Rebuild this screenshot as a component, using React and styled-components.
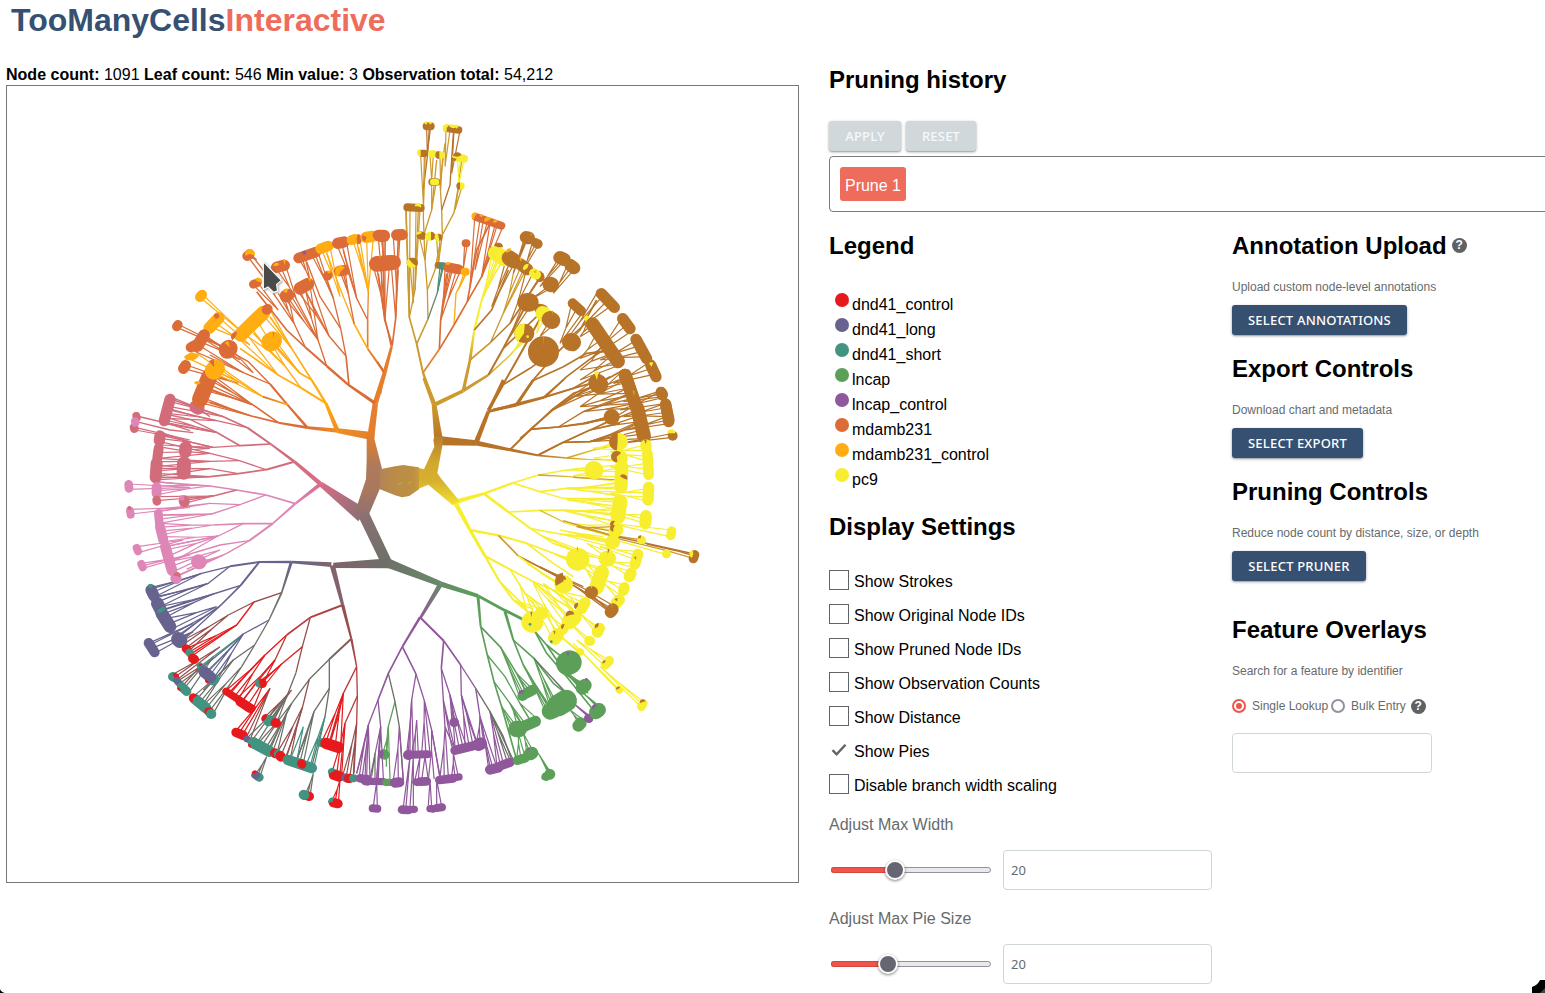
import React from "react";
import styled, { createGlobalStyle } from "styled-components";

const GlobalStyle = createGlobalStyle`
  * { box-sizing: border-box; }
  html, body { margin: 0; background: #fff; overflow: hidden; }
  body { font: 16px/20px "Liberation Sans", Arial, sans-serif; color: #000; }
  h1, h2, p { margin: 0; }
`;

/* ---------- tree data ---------- */

const COLORS = {
  R: "#e6191c", L: "#66638f", T: "#439383", G: "#5b9f59", U: "#90579c",
  M: "#db6c38", Y: "#ffad12", P: "#f7ee30", K: "#d26c7b", I: "#de86b6",
  B: "#b77429", D: "#cc9a2e", O: "#6d7068", N: "#95504e", Q: "#bd3a3a",
  H: "#d9b72e", E: "#e57f2e", V: "#8c7074", W: "#82636a", S: "#688a6a",
  F: "#ee8f22", J: "#d86c88",
};

/*
 * Every sector is drawn on its own grid, three units to a pixel.
 *   b colour width  x y x y ...            branch (width a-b tapers, colour A>B blends)
 *   f colour x y  x1 y1 x2 y2 n            n thin links from a fork to a row of leaves
 *   s colour width x1 y1 x2 y2             row of overlapping leaves
 *   w colour cx cy r from to               pie slice, degrees clockwise from the top
 */
const SECTORS = [
  { x: 340, y: 380, data: `
b V>O 34-32 68 398 140 548
b O>W 30-16 148 550 -20 556
b O>S 28-16 140 548 302 612
b S>G 16-11 302 612 415 648
b G 9-8 415 648 492 690 550 718
b S>U 15-8 302 612 240 716
b B>D 26-14 296 182 282 72
b D 14-10 282 72 252 -6
b B 28-17 296 182 408 189
b B 15-9 408 189 510 209
b B 9-6 510 209 592 226
b B>D 5 592 226 680 234
b D>P 4 680 234 740 238 830 240
b B 15-11 408 189 445 95
b B 9 445 95 490 0
b B 9-7 445 95 530 72 610 52
b B 5 610 52 700 25 780 -20
b B 8 530 72 580 0
b B 5 610 52 672 -2
b B 6 510 209 572 148 635 92
b B 5 635 92 720 40 790 5
b B 5 572 148 655 141 740 130 800 112
b B 5 592 226 670 187 750 150 840 130
b B 4 670 187 750 185 820 170
b D>P 5 680 234 760 210 830 195
b P 14-9 345 366 432 341
b P 7 432 341 518 309
b P 5 518 309 595 285 680 270 760 262
b P 5 518 309 600 335 680 325 830 322
b P 4 600 335 670 355 740 357 830 360
b D>P 4 595 285 690 290 820 302
b P 8 432 341 505 396
b P 6 505 396 572 446
b P 5 572 446 640 490 710 515
b P 5 505 396 600 391 670 390 830 402
b H>P 4 600 391 675 428 820 467
b P 5 572 446 660 462 740 470 830 485
b P 14-10 345 366 390 450
b P 9 390 450 435 528
b P 7 435 528 478 603
b P 6 478 603 520 660 570 700
b P 7 390 450 475 466
b P 6 475 466 560 490
b P 5 560 490 640 520 690 540
b D 5 475 466 535 528
b B 5 535 528 600 562 670 598
b P 5 560 490 640 550 700 590
b P 5 535 528 620 590 670 615
b P 6 435 528 510 568
b P 5 510 568 580 605 650 660 700 690
b P 5 510 568 555 640 610 680
b P 5 478 603 555 680
b P 4 580 605 640 630 720 680
f P 680 270 830 255 830 275 2
f P 680 325 830 308 830 345 3
f P 670 390 830 385 830 425 3
f P 675 428 830 435 830 475 3
f P 670 355 830 355 830 380 2
f P 660 462 820 480 810 500 3
f P 640 520 770 560 780 590 2
f P 640 490 700 510 790 540 2
f P 580 605 730 650 690 710 3
f B 600 562 730 620 760 650 2
f P 520 660 560 690 600 685 3` },

  { x: 110, y: 230, data: `
b E>F 24-14 785 618 682 602
b F>M 13-8 682 602 592 593
b M 8-6 592 593 505 578
b M 5 505 578 424 558 300 518
b M 5 505 578 428 524 300 480
b F>Y 14-9 682 602 648 520
b Y 6 648 520 572 473
b Y 5 572 473 503 434 390 355
b Y 7 648 520 605 450
b Y 5 605 450 545 355 480 260
b Y 5 605 450 568 428 500 350
b Y 4 572 473 525 408 430 310
b M 8-6 592 593 532 524
b M 6 532 524 480 462
b M 4 480 462 415 395 290 325
b M 4 480 462 400 428 300 375
b Y>M 5 532 524 458 500
b Y 4 458 500 385 455 320 425
b E 22-16 782 625 796 520
b E 16-12 796 520 824 428
b M 10-7 796 520 717 466
b M 7 717 466 650 408
b M 6 650 408 586 352
b M 5 586 352 530 300 440 185
b M 4 586 352 552 280 490 190
b M 4 650 408 624 330 560 210
b M 5 717 466 708 378
b M 4 708 378 692 296 670 205 650 150
b M 4 708 378 657 318 590 190
b M 4 692 296 630 200 590 95
b E 8-5 824 428 773 356
b E 5 773 356 773 270
b M 4 773 270 740 205 700 60
b Y 5 773 356 733 283
b Y 4 733 283 700 200 650 70
b M 4 733 283 715 190 700 130
b E>Y 4 773 270 775 185 745 50
b E 12-8 824 428 844 352
b M 4 844 352 825 265 805 130
f M 440 90 412 78 424 74 2
b M 4 412 78 480 168
b M 4 424 74 490 160
f M 505 240 430 165 445 160 2
f M 552 280 505 190 535 200 3
f M 624 330 520 200 545 200 3
f M 624 330 570 180 600 165 3
f M 657 318 560 180 605 165 3
f M 560 210 500 118 528 110 3
f M 600 150 568 88 585 80 3
f M 670 205 605 75 625 70 3
f Y 690 200 635 60 660 50 3
f M 740 205 680 42 710 38 3
f M 715 190 690 124 705 122 2
f Y 775 185 730 35 750 30 3
f Y 775 185 770 25 790 24 2
f M 825 265 805 20 825 20 2
f M 825 265 790 110 838 110 3
f Y 400 310 268 200 280 196 2
f Y 420 345 300 290 330 265 3
f Y 503 434 385 325 405 305 2
f Y 525 408 400 310 440 270 3
f Y 545 355 455 250 480 240 2
f Y 568 428 484 340 495 330 2
f M 365 362 200 292 208 285 2
f M 390 390 270 335 285 315 3
f M 430 428 350 368 365 358 2
f M 400 428 245 360 265 345 2
f Y 385 455 235 385 260 370 2
f M 385 460 220 415 230 405 2
f Y 458 500 315 430 330 410 2
f M 428 524 290 445 300 430 3
f M 428 524 280 480 290 460 3
f M 424 558 270 500 280 520 3
s M 30 412 78 418 73
w Y 420 72 15 250 110
s M 34 500 112 523 106
w Y 524 106 18 345 10
w Y 500 108 10 270 60
s M 26 430 163 442 158
w Y 445 155 12 300 100
s M 38 528 198 534 195
w Y 530 190 14 300 20
s M 38 570 175 594 162
w Y 600 155 12 330 20
s M 32 566 84 618 66
s Y 32 632 56 655 48
s M 34 683 40 702 36
s Y 30 725 30 735 27
w M 740 28 16 10 170
s Y 34 768 22 788 19
w M 770 22 14 200 300
s M 36 810 18 822 18
w U 583 68 6 0 360
s M 28 652 138 654 136
w Y 654 130 8 330 90
s M 32 688 123 703 121
w Y 692 124 17 200 50
s M 46 800 102 845 98
w Y 800 92 12 300 50
s Y 30 270 201 276 194
s M 28 200 290 204 284
s Y 36 298 294 326 264
w M 320 258 8 0 360
s M 36 262 348 282 316
s M 30 242 352 255 345
w Y 244 366 25 110 240
s M 32 220 416 227 406
w Y 230 392 12 320 60
s M 52 352 360 357 355
w Y 360 352 20 310 345
s Y 42 392 314 460 248
w M 377 320 14 220 20
s M 30 470 239 473 237
s Y 56 482 336 488 332
w M 490 325 18 355 8
s K 40 258 530 264 534
s M 48 270 508 298 440
w Y 262 465 12 300 60
s Y 54 311 422 318 415
w M 312 412 24 320 0` },

  { x: 380, y: 110, data: `
b E 8-6 0 852 12 790
b E 8-5 12 788 37 705
b M 5 12 788 -8 755
b M 5 37 705 14 630 8 380
b M 5 37 705 47 625 55 375
b D 10-7 164 888 129 788
b D 6 129 788 110 702
b D 5 110 702 88 622 78 300
b D 5 110 702 144 627
b D 4 144 627 142 540 135 450 130 320 133 140
b D 4 142 540 165 480 180 400
b S 4 144 627 172 548 186 475
b D 4 88 622 105 540 115 300
b E 5 129 788 178 718
b M 5 178 718 182 630 200 490
b M 5 178 718 222 645
b Y 4 222 645 228 550 255 495
b M 5 222 645 262 575 290 420 330 340
b M 5 262 575 305 500 335 420
b D 4 133 370 155 300 170 150
b D 4 175 460 187 375 185 300 180 220 195 100
b D 4 187 375 222 308 235 230 245 150
b B 4 185 300 210 225 220 70
b B 4 130 240 142 140 148 55
b D 13-10 164 884 250 842
b D 10-7 250 842 325 795
b D>P 5 325 795 388 738 430 690
b D 10-8 250 842 270 750
b D>P 9-6 270 750 283 660
b P 7-4 283 660 305 570 350 450
b B 5 283 660 335 600 385 480
b P 4 305 570 345 490 370 450
b D 5 270 750 332 697
b D 4 332 697 370 610 430 480
b B 4 332 697 390 640 450 550 490 490
b B 6 325 795 370 715 430 600
b B 5 370 715 470 620
b B 10-8 325 900 368 825
b B 6 368 825 408 755 500 590
b B 5 368 825 450 775 500 740
b B 9 340 900 410 885
b B 9-6 410 885 458 812
b B 5 458 812 520 740 600 660 650 570
b B 5 458 812 550 770 620 730 700 720
b B 8-6 410 885 495 862
b B 5 495 862 560 800 640 740 700 700
b B 5 495 862 580 835 650 815
b B 5 515 900 580 850 640 830 730 780
f M 14 630 -10 470 10 480 2
f M 47 625 35 480 55 480 2
f M 14 470 4 385 16 385 2
f M 50 540 40 380 60 375 2
f D 88 622 78 300 90 300 2
f D 105 540 108 300 120 300 2
f D 100 580 90 460 100 460 2
f D 135 450 118 380 142 385 2
f D 130 280 122 135 136 135 2
f B 142 130 140 50 152 50 2
f D 155 300 155 220 168 220 2
f D 155 210 150 135 160 135 2
f D 182 240 180 140 188 140 2
f D 195 170 198 60 210 60 2
f B 215 190 222 60 240 62 2
f P 235 230 232 145 252 148 3
f D 225 300 236 230 246 230 2
f D 175 470 170 385 180 385 2
f T 172 548 180 470 190 470 2
f M 190 580 195 475 212 480 2
f M 182 630 205 480 240 485 4
f Y 235 540 252 488 260 488 2
f M 250 475 254 402 262 402 2
f M 270 530 284 325 300 328 2
f M 285 480 310 330 322 335 2
f M 305 500 330 340 345 345 2
f M 305 500 350 350 368 352 2
f P 305 570 335 440 365 455 4
f B 335 590 375 460 400 465 3
f D 370 610 405 465 440 475 3
f B 390 640 440 475 480 500 3
f B 400 490 430 395 440 392 3
f B 430 480 455 405 475 405 3
f B 480 530 530 455 550 455 3
f B 520 550 560 470 585 475 3
f B 450 570 505 530 520 530 2
f B 390 680 430 580 450 590 2
f P 470 670 480 620 495 620 2
f B 480 680 505 640 525 640 2
f P 400 725 425 685 440 690 2
f B 540 700 575 580 610 605 3
f B 560 690 650 550 690 590 4
f B 600 680 620 640 650 650 3
f B 600 745 650 670 700 720 4
f B 600 780 670 700 725 760 3
f B 600 810 690 740 720 765 3
f B 640 740 725 625 760 660 3
f B 660 750 770 690 800 740 4
f B 700 820 810 755 835 790 3
f B 600 890 720 790 765 880 5
f B 720 900 840 845 860 880 3
s B 24 140 49 152 49
w P 140 44 10 300 20
w P 150 44 9 330 50
s B 22 200 55 236 60
w P 200 54 12 180 40
w P 216 54 11 300 90
w P 230 56 11 320 40
s B 22 126 130 134 130
s P 22 155 132 163 132
w P 122 128 11 180 360
s P 22 182 135 184 135
w B 178 135 12 180 360
s P 24 228 142 252 146
w B 232 140 13 280 70
w B 222 145 8 100 300
s B 22 156 216 170 216
s P 20 160 216 168 216
s P 22 242 228 243 228
w B 240 228 11 180 0
s B 24 82 292 122 294
w P 114 289 10 270 110
s B 24 122 376 126 377
s P 26 148 379 150 379
w B 153 378 13 0 180
w P 118 373 9 260 60
s B 22 174 382 176 382
w P 176 382 12 170 350
s B 30 95 458 99 458
w P 96 458 16 130 320
s B 20 174 466 178 466
s T 22 186 468 190 468
s M 30 205 472 236 478
w Y 205 465 9 280 60
s Y 24 254 485 257 485
s M 24 257 400 259 400
s M 24 288 321 364 347
w Y 285 318 11 200 40
w Y 305 322 9 300 40
w Y 324 332 11 250 60
w Y 347 338 9 280 50
s M 34 -5 376 12 376
s M 34 50 375 66 374
s M 42 -10 460 42 457
w Y 0 445 10 345 15
s P 46 347 430 372 446
w B 355 412 14 290 90
s B 46 388 444 400 452
s B 36 420 462 442 478
w Y 388 425 10 250 40
w Y 423 455 12 335 20
w P 442 475 13 240 20
s B 28 476 496 480 502
s P 30 462 490 468 494
w Y 468 490 9 300 10
s B 38 438 382 446 384
s B 28 466 398 474 402
w Y 452 380 10 0 20
s B 40 540 443 552 448
s B 38 572 466 582 474
s B 46 510 523 514 524
s B 56 440 577 448 577
s B 30 478 596 488 598
s P 44 488 610 498 618
s B 50 510 628 516 632
w D 518 618 16 350 5
s B 58 432 670 434 670
w P 432 670 29 215 5
w P 443 680 4 0 360
s B 92 490 725 491 725
w D 490 712 32 358 3
s B 54 573 696 576 697
s B 30 578 580 603 603
s B 34 664 551 703 592
s P 16 620 625 626 630
s B 42 638 643 714 754
s B 34 728 626 750 656
s B 34 768 688 800 746
s B 34 812 765 828 800
w P 815 770 13 320 20
s B 54 653 820 658 824
w P 653 815 27 340 10
s B 38 736 795 768 890
s B 32 843 846 847 856
s B 34 857 882 866 935` },

  { x: 520, y: 330, data: `
b B 5 0 325 35 297
b B 4 35 297 92 242 160 200 270 140
b B 5 35 297 115 291 190 280 275 262
b B 4 115 291 190 245 330 190
b B 5 55 376 130 337
b B 4 130 337 210 300 350 240
b B 5 130 337 210 335 290 310 375 270
f B 92 242 210 160 240 175 2
f B 160 200 320 140 335 190 4
f B 190 245 335 190 350 235 4
f B 190 280 250 265 280 265 2
f B 210 300 345 225 360 275 4
f B 210 335 355 275 375 325 5
f B 310 215 415 185 430 200 3
f B 310 260 435 220 445 260 4
f B 320 300 440 260 450 280 3
f B 300 340 450 312 458 322 2
f P 220 355 290 335 300 360 3
f P 220 384 290 375 300 395 2
f P 270 365 375 345 385 395 4
f P 270 410 380 400 385 435 3
f P 160 437 290 415 300 440 2
f D 160 442 220 446 300 450 2
f P 140 475 290 460 300 500 4
f P 140 510 290 505 300 540 4
f P 270 490 386 475 386 515 4
f P 130 542 280 540 290 590 4
f P 270 548 380 555 375 580 3
f D 170 590 280 590 290 620 3
f P 270 580 455 600 450 620 2
b D 4 130 572 270 615 364 630
b B 4 290 620 523 672
b D 4 270 620 440 662 520 685
b B 4 380 642 480 665 523 678
b P 4 270 625 440 674
f P 120 600 250 620 285 640 3
f P 60 615 180 675 262 690 3
f P 200 640 250 660 270 690 2
f P 240 650 355 665 350 690 3
f P 240 690 350 700 330 740 4
f P 180 690 240 720 230 780 4
f P 230 740 315 765 300 815 4
f B 60 710 125 745 214 787 2
f B 160 765 278 838 272 848 3
f B 200 780 285 830 270 846 2
f P 20 700 110 760 150 780 2
f P 120 780 195 820 160 870 4
f P 70 760 190 830 150 880 3
f P 40 760 150 865 110 920 4
f P 0 765 60 845 30 880 3
f P 30 800 130 890 100 930 3
f P 180 850 240 895 230 910 3
f P 130 860 210 930 205 936 2
f P 100 900 180 966 176 968 2
f P 170 930 270 992 255 1008 3
f P 160 940 298 1079 294 1080 2
f P 240 1010 370 1115 362 1130 3
s B 34 424 188 427 193
s B 34 437 225 447 270
w B 458 317 15 0 360
w P 454 310 12 270 90
s B 38 315 135 345 220
s B 42 352 235 372 318
w D 342 200 18 345 10
s B 54 232 158 236 162
w P 231 150 26 340 10
s B 46 274 261 276 261
w P 298 335 26 0 360
w B 293 335 26 185 0
s P 40 303 382 303 388
w B 290 380 17 170 50
s P 40 305 410 303 470
s P 44 300 515 294 560
s P 38 291 600 284 606
s P 40 275 637 280 637
w B 310 445 12 300 110
w B 280 582 10 180 30
w B 280 595 10 180 30
s P 34 378 345 378 350
s P 32 382 370 386 434
w B 378 343 15 335 8
s P 54 220 420 223 421
s P 34 386 472 384 510
s P 36 378 558 376 580
s P 28 455 603 452 617
s P 26 364 630 365 630
w B 362 625 9 270 10
s P 26 439 672 440 672
s B 28 524 674 520 686
w P 520 672 12 200 350
s P 68 172 688 174 688
w B 172 667 15 355 5
s P 48 260 686 264 686
w B 263 672 15 0 25
s P 32 354 672 345 703
w B 346 690 10 340 20
s P 34 333 730 328 740
s P 44 245 727 230 772
s B 38 213 787 215 787
w P 214 776 10 350 10
s P 32 313 772 310 782
s P 34 298 810 288 820
w B 292 814 10 300 0
s B 36 278 838 272 846
w D 276 835 12 350 5
s P 54 130 763 132 763
w B 131 754 26 240 355
w B 126 748 12 320 100
s P 34 195 818 185 835
s P 46 162 862 148 875
s P 30 132 893 128 900
s P 40 112 915 104 925
w B 173 829 11 220 10
w B 150 855 13 250 80
w B 131 890 8 200 20
w T 94 935 4 0 360
w B 105 915 13 335 5
s P 34 238 895 232 906
w B 234 890 10 240 20
s P 30 208 933 210 933
s P 22 179 966 181 966
s P 28 268 992 256 1004
w B 254 998 7 250 30
s P 22 297 1079 298 1080
w B 295 1077 7 250 50
s P 26 370 1120 364 1130
w B 368 1116 8 250 80
s P 64 36 876 38 876
s P 38 63 850 66 850
w B 35 862 17 345 5
w T 30 883 4 0 360` },

  { x: 110, y: 380, data: `
b V>J 44-15 758 406 632 312
b J>K 13-9 632 312 553 245
b K 8-6 553 245 482 192
b K 6 482 192 412 143
b K 5 412 143 340 110 190 60
b K 4 412 143 320 122 180 90
b K 5 482 192 390 197 322 158
b K 4 322 158 240 118 180 105
b K 4 322 158 180 130
b K 4 390 197 310 202 150 165
b K 6 553 245 468 269
b K 4 468 269 388 242 300 220 150 185
b K 5 468 269 385 281 300 290 140 293
b K 4 388 242 300 244 145 245
b K 4 385 281 300 266 140 265
b J>I 12-7 632 312 556 371
b I 5 556 371 468 345 380 330
b I 4 380 330 300 318 140 306
b K 4 380 330 310 348 220 362
b I 4 468 345 390 374 300 370
b I 7-5 556 371 488 431
b I 5 488 431 400 431 310 435
b I 6 488 431 418 482
b I 4 418 482 330 495 180 540
b I 4 418 482 350 520 200 590
b I 4 390 374 305 402 150 405
b I 4 400 431 325 468 165 500
f K 340 110 180 50 180 80 3
f K 320 122 175 85 170 115 3
f K 300 110 255 80 270 88 3
f K 322 158 165 110 160 130 3
b K 4 80 108 180 132 240 152
b K 4 76 124 180 150 250 158
f K 240 180 74 142 76 150 2
f K 310 202 145 155 150 195 3
f K 300 205 225 200 230 210 2
f K 300 220 145 200 145 235 3
f K 300 244 142 235 140 260 2
f K 300 266 140 255 138 290 3
f K 300 290 138 280 135 300 2
f I 300 318 140 305 138 345 4
f I 240 322 56 312 56 328 2
f K 310 348 140 350 140 362 2
f K 310 348 222 355 222 370 2
f I 240 382 62 388 62 402 2
f I 300 370 145 388 145 395 2
f I 305 402 148 405 148 430 3
f I 310 435 150 430 155 465 4
f I 325 468 160 470 165 500 3
f I 220 480 82 500 85 518 2
f I 320 470 165 510 180 550 3
f I 240 525 95 550 98 565 3
f I 330 510 175 545 190 575 3
f I 340 525 265 545 195 590 3
s K 34 180 58 163 122
s K 24 79 108 80 113
s K 26 72 142 73 146
s I 24 75 124 76 128
s K 34 150 168 148 182
s K 30 146 205 142 235
s K 36 140 250 137 292
s K 38 227 203 226 215
s K 42 222 250 221 278
s I 30 140 322 140 340
s K 26 140 360 141 364
s I 26 56 313 57 325
s K 32 222 362 223 366
w I 215 354 8 0 360
s I 24 60 392 62 404
w K 58 384 6 0 360
s I 26 145 400 148 430
s I 30 150 440 160 480
s I 32 166 500 186 572
s I 32 197 595 199 596
w K 201 587 11 270 120
s I 24 80 504 84 514
s I 24 94 552 98 562
s I 44 265 545 268 546` },

  { x: 130, y: 560, data: `
b W>L 14-8 604 14 484 6
b L 7-6 484 6 388 6 300 19
b L 4 300 19 215 40 70 85
b L 6 388 6 332 76
b L 5 332 76 270 138
b L 4 270 138 140 230
b L 4 332 76 250 102 100 150
b L 4 300 19 235 70 90 110
b L>O 9-5 484 6 455 98
b N 4 455 98 372 126 295 165
b O 6-4 455 98 417 180
b L 4 417 180 340 222 220 320
b O 4 417 180 374 255 335 320
b R 4 372 126 320 195 185 280
b W 16-9 607 16 638 135
b N 10-6 638 135 664 236
b N>Q 7-4 664 236 680 320
b Q>N 4 680 320 682 408 680 490 672 640
b Q 4 680 320 640 400 600 540
b Q 4 682 408 645 490 630 640
b N>Q 6 638 135 541 172
b Q 5 541 172 470 225
b R 4 470 225 405 285 300 395
b Q 4 470 225 435 300 330 430
b N 4 541 172 517 260 498 338
b R 4 517 260 455 312 390 370
b N>O 6 664 236 598 298
b O 4 598 298 538 358 485 430 420 560
b O 4 598 298 598 385 585 470 545 620
b O 4 598 385 552 455 500 600
b N 4 538 358 518 440 470 590
b O 4 498 338 470 410 430 480
b O 4 374 255 310 300 220 390
f L 215 40 65 82 75 110 3
f L 235 70 80 110 90 140 3
f L 250 102 90 140 110 170 4
f L 260 140 110 175 130 205 3
f L 270 138 140 215 160 240 3
f L 190 190 55 250 60 255 2
f L 190 215 65 265 75 280 2
f N 295 165 150 245 180 270 4
f R 320 195 170 265 190 285 3
f N 270 260 125 345 140 360 3
f N 210 320 140 365 160 375 2
f O 250 290 150 370 175 400 3
f T 340 222 210 320 230 340 2
f L 340 222 230 335 260 365 4
f O 310 300 190 410 215 440 4
f O 335 320 215 440 250 460 4
f R 405 285 290 390 325 420 4
f R 435 300 320 415 370 445 4
f R 455 312 380 370 405 375 3
f R 420 385 320 510 340 520 3
f N 420 385 350 530 360 540 2
f N 485 390 400 475 420 480 3
f O 470 410 350 535 380 550 3
f O 470 410 420 480 440 490 3
f O 485 430 380 555 420 570 4
f O 470 460 430 570 440 585 2
f N 518 440 440 580 480 600 4
f T 520 500 480 600 500 605 2
f O 552 455 500 600 520 610 3
f T 585 470 530 610 550 630 3
f O 410 590 375 645 390 650 3
f O 550 640 525 705 540 710 3
f R 640 400 575 545 600 550 3
f R 640 400 600 550 632 560 3
f R 645 490 605 640 635 645 3
f N 680 490 640 640 670 650 4
f R 630 660 605 725 625 732 3
s L 34 63 90 72 108
s L 38 82 130 92 150
s L 38 95 160 120 200
w T 61 78 7 0 360
s T 12 88 153 100 146
s L 44 145 238 150 242
s L 30 56 249 74 277
s R 26 168 266 172 269
s T 24 178 278 181 281
s R 28 188 295 193 298
s T 28 128 350 133 352
w R 134 353 14 330 150
s L 22 141 362 145 367
s T 28 155 380 170 394
w R 149 384 8 160 280
s T 20 210 317 212 320
w R 212 317 6 270 80
s T 32 246 360 252 358
s L 34 222 335 242 352
w R 233 362 8 150 290
s T 32 196 418 228 444
w R 190 414 14 190 60
s R 26 236 455 239 455
s T 30 243 462 244 462
s R 22 288 394 366 445
s R 28 330 425 360 445
s R 28 393 370 397 370
w T 388 370 13 160 0
s T 34 416 482 418 482
w R 408 476 14 230 20
s R 28 436 488 439 489
s R 28 318 517 340 526
s L 20 350 537 352 538
s T 34 370 548 418 574
w R 362 555 8 170 300
s R 28 434 579 436 581
s T 26 444 582 446 584
s R 30 451 588 453 590
s T 32 474 600 545 624
s R 26 514 610 516 613
s T 26 384 650 388 652
s L 24 376 645 378 646
w R 374 640 9 270 70
s R 28 533 708 538 709
s T 30 521 704 523 705
s T 26 572 548 576 548
s R 34 588 550 625 562
s R 32 612 644 628 649
w T 606 636 12 240 60
s L 26 647 653 651 655
s R 28 656 655 659 655
s T 24 669 655 671 655
s R 28 610 728 624 731
w T 608 726 14 260 20` },

  { x: 340, y: 560, data: `
b U 8-6 240 172 187 260
b U 6 240 172 311 242
b U 5 187 260 145 340 114 420
b U 4 114 420 85 495 50 640
b U 5 187 260 228 342
b U 4 228 342 215 420 205 580
b U 4 228 342 253 422 275 510 300 650
b O 4 145 340 165 425 178 500 190 660
b U 4 114 420 122 500 110 660
b G 4 165 425 145 500 140 580
b U 5 311 242 304 325
b U 4 304 325 310 420 315 500 345 570
b U 4 304 325 330 405 343 480
b U 5 311 242 362 315
b U 4 362 315 364 405 410 545
b U 4 362 315 407 385
b U 4 407 385 420 470 450 620
b O 4 407 385 450 455 490 530 515 600
b G 9-6 414 110 422 200
b G 5 422 200 442 285 462 365 485 440 530 600
b G 5 422 200 482 262 530 340 560 400
b G 4 442 285 495 350 540 430 570 480
b G 4 462 365 510 430 550 500
b G 9-6 495 155 520 240
b G 5 520 240 550 315 600 400 630 440
b G 5 520 240 582 295 640 370 690 410
b G 6 495 150 548 180 585 215
b G 5 585 215 620 255 690 310
b G 5 585 215 620 280 680 350 760 450
b G 5 620 255 680 345 735 380
f U 85 495 50 640 75 655 4
f U 85 495 80 650 90 655 2
f U 122 500 90 655 110 660 2
f O 105 580 95 650 105 655 2
f U 122 500 115 655 130 655 2
f U 110 665 100 740 112 740 2
f G 145 500 128 580 150 660 3
f U 178 500 160 660 190 665 3
f U 215 420 200 580 220 580 3
f U 230 480 215 580 235 585 3
f U 253 422 245 580 270 580 3
f U 210 590 190 740 198 740 2
f U 220 590 210 740 220 740 2
f U 275 510 265 660 300 655 3
f U 240 590 225 660 235 660 2
f U 255 590 245 660 265 660 2
f U 270 660 265 735 275 740 2
f U 290 660 290 735 305 740 2
f U 310 420 335 560 345 570 2
f U 315 500 300 650 325 650 3
f U 340 580 335 650 355 650 3
f U 330 405 336 485 345 485 2
f U 330 405 345 560 380 560 4
f U 364 405 375 555 410 550 4
f U 420 470 410 545 430 540 3
f U 420 470 445 620 470 620 3
f U 450 455 470 610 490 610 3
f O 450 455 500 600 520 600 3
f G 485 440 510 500 530 500 3
f G 510 430 530 490 555 490 3
f G 482 262 535 400 550 400 3
f G 530 340 555 390 580 390 3
f G 540 430 570 480 590 475 2
f G 535 520 530 595 555 590 3
f G 550 520 560 580 580 575 3
f G 595 580 620 630 630 635 3
f G 550 315 610 440 630 440 4
f G 582 295 630 440 650 430 4
f O 582 295 665 385 690 410 3
f G 670 330 715 380 735 390 3
f G 690 345 730 370 745 400 3
f G 730 400 770 440 780 440 3
f U 700 430 745 465 750 475 2
f G 690 450 715 490 730 480 3
s U 26 60 655 75 658
s U 32 77 660 82 661
s U 22 95 664 130 665
s G 22 138 667 150 667
s U 30 165 668 178 667
s U 24 98 745 112 746
s G 30 133 583 134 584
w U 131 583 15 200 350
s U 30 204 585 206 585
s U 24 215 584 262 583
s U 22 228 666 230 667
s U 26 240 665 260 664
s U 26 298 660 340 655
s U 22 345 653 357 651
s U 26 186 749 205 750
s U 22 210 749 223 748
s U 22 270 746 280 747
s U 24 290 744 306 742
s U 28 342 487 343 487
s U 28 345 571 400 557
s U 38 416 554 422 551
s U 30 450 629 475 623
s U 28 482 617 510 607
s G 28 532 601 555 594
s G 38 570 582 576 579
w U 564 572 8 340 30
s G 30 547 408 552 405
s G 32 562 398 578 390
w U 545 399 9 250 70
s G 50 530 507 536 507
s G 34 545 502 586 484
s G 24 616 650 619 651
s G 32 629 642 630 643
s G 50 630 454 644 448
s G 66 655 436 678 422
s G 72 684 310 689 307
w U 684 293 17 350 12
s G 40 727 384 735 376
w U 738 362 8 340 70
s G 36 715 497 722 490
s U 26 745 474 747 476
s G 42 768 457 777 450
w U 764 441 8 200 60` },
];

function taperOutline(pts, w1, w2) {
  const left = [];
  const right = [];
  const last = pts.length - 1;
  pts.forEach(([x, y], i) => {
    const [ax, ay] = pts[Math.max(0, i - 1)];
    const [bx, by] = pts[Math.min(last, i + 1)];
    const len = Math.hypot(bx - ax, by - ay) || 1;
    const half = (w1 + ((w2 - w1) * i) / last) / 2;
    const nx = (-(by - ay) / len) * half;
    const ny = ((bx - ax) / len) * half;
    left.push(`${x + nx},${y + ny}`);
    right.unshift(`${x - nx},${y - ny}`);
  });
  return [...left, ...right].join(" ");
}

function slicePath(cx, cy, r, from, to) {
  const sweep = ((to - from) % 360 + 360) % 360;
  if (sweep === 0) {
    return `M${cx - r} ${cy}a${r} ${r} 0 1 1 ${2 * r} 0a${r} ${r} 0 1 1 ${-2 * r} 0Z`;
  }
  const at = (deg) => {
    const a = (deg * Math.PI) / 180;
    return `${cx + r * Math.sin(a)} ${cy - r * Math.cos(a)}`;
  };
  return `M${cx} ${cy}L${at(from)}A${r} ${r} 0 ${sweep > 180 ? 1 : 0} 1 ${at(to)}Z`;
}

const parse = (data) => data.trim().split("\n").map((row) => row.trim().split(/\s+/));

function Branch({ id, row }) {
  const [, colour, width, ...rest] = row;
  const n = rest.map(Number);
  const pts = [];
  for (let i = 0; i < n.length; i += 2) pts.push([n[i], n[i + 1]]);
  const [c1, c2] = colour.split(">");
  const [w1, w2] = width.split("-").map(Number);
  const [start, end] = [pts[0], pts[pts.length - 1]];
  const paint = c2 ? `url(#${id})` : COLORS[c1];
  return (
    <>
      {c2 && (
        <linearGradient id={id} gradientUnits="userSpaceOnUse" x1={start[0]} y1={start[1]} x2={end[0]} y2={end[1]}>
          <stop offset="0" stopColor={COLORS[c1]} />
          <stop offset="1" stopColor={COLORS[c2]} />
        </linearGradient>
      )}
      {w2 ? (
        <polygon points={taperOutline(pts, w1, w2)} fill={paint} />
      ) : (
        <polyline points={pts.map((p) => p.join(",")).join(" ")} fill="none" stroke={paint} strokeWidth={w1} strokeLinejoin="round" />
      )}
    </>
  );
}

/* Leaves hang in pairs: each pair shares a short stem before it splits. */
function Fan({ row }) {
  const [x, y, x1, y1, x2, y2, count] = row.slice(2).map(Number);
  const leaf = (i) => {
    const t = i / (count - 1);
    return [x1 + (x2 - x1) * t, y1 + (y2 - y1) * t];
  };
  let d = "";
  for (let i = 0; i < count; i += 2) {
    const a = leaf(i);
    if (i + 1 >= count || count === 2) {
      d += `M${x} ${y}L${a[0]} ${a[1]}`;
      if (count === 2) d += `M${x} ${y}L${x2} ${y2}`;
      continue;
    }
    const b = leaf(i + 1);
    const fx = x + ((a[0] + b[0]) / 2 - x) * 0.4;
    const fy = y + ((a[1] + b[1]) / 2 - y) * 0.4;
    d += `M${x} ${y}L${fx} ${fy}L${a[0]} ${a[1]}M${fx} ${fy}L${b[0]} ${b[1]}`;
  }
  return <path d={d} fill="none" stroke={COLORS[row[1]]} strokeWidth="3.6" />;
}

function Leaves({ row }) {
  const [w, x1, y1, x2, y2] = row.slice(2).map(Number);
  return <line x1={x1} y1={y1} x2={x2} y2={y2} stroke={COLORS[row[1]]} strokeWidth={w} strokeLinecap="round" />;
}

function SectorLayer({ sector, index, nodes }) {
  return (
    <g transform={`translate(${sector.x} ${sector.y}) scale(.33333)`}>
      {parse(sector.data).map((row, i) => {
        if (!nodes && row[0] === "b") return <Branch key={i} id={`br${index}-${i}`} row={row} />;
        if (!nodes && row[0] === "f") return <Fan key={i} row={row} />;
        if (nodes && row[0] === "s") return <Leaves key={i} row={row} />;
        if (nodes && row[0] === "w") return <path key={i} d={slicePath(...row.slice(2).map(Number))} fill={COLORS[row[1]]} />;
        return null;
      })}
    </g>
  );
}

function Trunk() {
  return (
    <g transform="translate(340 380) scale(.33333)">
      <defs>
        <linearGradient id="hub"><stop offset="0" stopColor="#b38455" /><stop offset=".3" stopColor="#b98b49" /><stop offset=".85" stopColor="#bd9043" /><stop offset="1" stopColor="#c69c39" /></linearGradient>
        <linearGradient id="west" x2="0" y2="1"><stop offset="0" stopColor="#e87f28" /><stop offset=".4" stopColor="#ad7a5c" /><stop offset=".68" stopColor="#aa785d" /><stop offset="1" stopColor="#8c7074" /></linearGradient>
        <linearGradient id="east" x2="0" y2="1"><stop offset="0" stopColor="#b8802c" /><stop offset=".4" stopColor="#d3a92f" /><stop offset=".65" stopColor="#d7b02f" /><stop offset="1" stopColor="#f2e22f" /></linearGradient>
      </defs>
      <polygon fill="url(#west)" points="80,155 103,160 103,176 125,262 128,305 118,330 83,412 48,386 78,298 80,240" />
      <polygon fill="url(#east)" points="252,268 283,200 280,180 284,168 310,170 308,192 292,280 305,298 358,362 338,376 265,314 236,326 236,264" />
      <polygon fill="url(#hub)" points="120,268 165,259 190,255 210,258 237,262 237,328 208,348 186,352 165,346 120,328" />
      <path d="M174 312l12-3 M204 310l12-5" stroke="#d9b72e" strokeWidth="2" />
    </g>
  );
}

function Tree() {
  return (
    <TreeSvg viewBox="7 86 791 796">
      {SECTORS.map((s, i) => <SectorLayer key={i} sector={s} index={i} />)}
      <Trunk />
      {SECTORS.map((s, i) => <SectorLayer key={i} sector={s} index={i} nodes />)}
      <path d="M263.3 261.5V289.5L268 287L273.4 292.2L277.6 290.8L276.6 284.4L281.4 280.4Z" fill="#4a4a4a" stroke="#fff" strokeWidth="1.2" filter="drop-shadow(1px 1px 1px rgba(0,0,0,.35))" />
    </TreeSvg>
  );
}

/* ---------- page ---------- */

const Page = styled.div`
  position: relative; width: 1545px; height: 993px; overflow: hidden;
`;
const Header = styled.header`
  height: 64px; padding-left: 11px;
`;
const Title = styled.h1`
  font-size: 32px; line-height: 40px; color: #365071; white-space: nowrap;
  span { color: #ee6c5b; }
`;
const Main = styled.main`
  display: flex; gap: 30px; padding-left: 6px;
`;
const ChartColumn = styled.section` width: 793px; flex: none; `;
const Stats = styled.p`
  height: 21px; line-height: 21px; letter-spacing: 0.015px; white-space: nowrap;
`;
const ChartFrame = styled.div`
  width: 793px; height: 798px; border: 1px solid #777;
`;
const TreeSvg = styled.svg` display: block; width: 791px; height: 796px; `;
const Side = styled.section` width: 740px; flex: none; padding-top: 2px; `;
const Heading = styled.h2`
  display: flex; align-items: center; gap: 5px;
  height: 28px; font-size: 24px; line-height: 28px; white-space: nowrap;
`;
const ButtonRow = styled.div` display: flex; gap: 5px; margin: 27px 0 5px; `;
const Button = styled.button`
  display: block; width: ${(p) => p.$w}px; height: 30px; padding: 0; border: 0; border-radius: 3px;
  font: 500 13px/30px "Noto Sans", sans-serif; letter-spacing: 0.2px; text-align: center; white-space: nowrap;
  color: ${(p) => (p.$muted ? "#f6f8f8" : "#fff")};
  background: ${(p) => (p.$muted ? "#d0d8dc" : "#365071")};
  box-shadow: 0 1px 3px rgba(0, 0, 0, 0.35), 0 1px 1px rgba(0, 0, 0, 0.12);
`;
const History = styled.div`
  height: 56px; padding: 10px; border: 1px solid #7b7b7b; border-radius: 4px;
`;
const Chip = styled.div`
  width: 66px; height: 34px; border-radius: 3px; background: #ee6c5b; color: #fff;
  line-height: 37px; text-align: center; white-space: nowrap;
`;
const Columns = styled.div` display: flex; margin-top: 20px; `;
const SettingsColumn = styled.div` width: 403px; `;
const ToolsColumn = styled.div` width: 320px; `;
const LegendList = styled.ul`
  list-style: none; margin: 32px 0 21px; padding: 0 0 0 6px;
`;
const LegendItem = styled.li`
  display: flex; gap: 3px; height: 25px; line-height: 25px;
  &::before {
    content: ""; width: 14px; height: 14px; margin-top: 1px; border-radius: 50%; background: ${(p) => p.$c};
  }
`;
const CheckList = styled.div` margin-top: 26px; padding-top: 3px; `;
const CheckRow = styled.label`
  display: flex; gap: 5px; height: 34px; line-height: 23px;
`;
const Box = styled.span`
  width: 20px; height: 20px; border: ${(p) => (p.$on ? 0 : "1px solid #5f6567")}; flex: none;
  svg { display: block; width: 20px; height: 20px; }
`;
const SliderLabel = styled.div` height: 20px; margin-top: ${(p) => p.$top}px; color: #666b6c; `;
const SliderRow = styled.div`
  display: flex; align-items: center; gap: 12px; height: 40px; margin-top: 15px; padding-left: 2px;
`;
const Track = styled.div`
  display: flex; align-items: center; width: 160px; height: 6px; border-radius: 3px; border: 1px solid #92929f;
  background: #e9e9ec;
`;
const Fill = styled.div`
  flex: none; height: 6px; margin-left: -1px; border-radius: 3px 0 0 3px; background: #f0554d; border: 1px solid #d8473f; border-right: 0;
`;
const Thumb = styled.div`
  flex: none; width: 20px; height: 20px; margin-left: -10px; border: 2px solid #fff; border-radius: 50%;
  background: #666672; box-shadow: 0 1px 3px rgba(0, 0, 0, 0.5);
`;
const Field = styled.input`
  display: block; width: ${(p) => p.$w}px; height: 40px; padding: 0 7px; border: 1px solid #cfd6d9; border-radius: 4px;
  font: 13px "Noto Sans", sans-serif; color: #666b6c; background: #fff; outline: 0;
`;
const Tool = styled.section` height: ${(p) => p.$h}px; `;
const Hint = styled.p`
  height: 16px; margin: 19px 0 10px; font-size: 12px; line-height: 16px; color: #666b6c; white-space: nowrap;
`;
const RadioRow = styled.div`
  display: flex; align-items: center; height: 20px; margin: 17px 0; font-size: 12px; line-height: 22px; color: #666b6c; white-space: nowrap;
`;
const Radio = styled.span`
  display: flex; align-items: center; justify-content: center; width: 14px; height: 14px; margin: 0 6px 0 ${(p) => p.$left || 0}px;
  border: 2px solid ${(p) => (p.$on ? "#f0554d" : "#92929f")}; border-radius: 50%;
  &::after { content: ""; width: 6px; height: 6px; border-radius: 50%; background: ${(p) => (p.$on ? "#f0554d" : "none")}; }
`;
const HelpDot = styled.span`
  width: 15px; height: 15px; margin: 0 0 ${(p) => p.$lift || 0}px ${(p) => p.$left || 0}px; border-radius: 50%;
  background: #5e6264; color: #fff; font: bold 12px/15px "Liberation Sans", sans-serif; text-align: center;
`;
const Corner = styled.svg`
  position: absolute; bottom: 0; ${(p) => p.$side}: 0; width: 13px; height: 13px;
`;

const LEGEND = [
  ["dnd41_control", "#e6191c"], ["dnd41_long", "#66638f"], ["dnd41_short", "#439383"], ["lncap", "#5b9f59"],
  ["lncap_control", "#90579c"], ["mdamb231", "#db6c38"], ["mdamb231_control", "#ffad12"], ["pc9", "#f7ee30"],
];
const OPTIONS = [
  "Show Strokes", "Show Original Node IDs", "Show Pruned Node IDs", "Show Observation Counts",
  "Show Distance", "Show Pies", "Disable branch width scaling",
];
const TOOLS = [
  ["Annotation Upload", "Upload custom node-level annotations", "SELECT ANNOTATIONS", 175],
  ["Export Controls", "Download chart and metadata", "SELECT EXPORT", 131],
  ["Pruning Controls", "Reduce node count by distance, size, or depth", "SELECT PRUNER", 134],
];

function Slider({ label, top, position }) {
  return (
    <>
      <SliderLabel $top={top}>{label}</SliderLabel>
      <SliderRow>
        <Track>
          <Fill style={{ width: position }} />
          <Thumb />
        </Track>
        <Field $w={209} defaultValue="20" />
      </SliderRow>
    </>
  );
}

export default function App() {
  return (
    <Page>
      <GlobalStyle />
      <Header>
        <Title>TooManyCells<span>Interactive</span></Title>
      </Header>
      <Main>
        <ChartColumn>
          <Stats>
            <b>Node count:</b> 1091 <b>Leaf count:</b> 546 <b>Min value:</b> 3 <b>Observation total:</b> 54,212
          </Stats>
          <ChartFrame><Tree /></ChartFrame>
        </ChartColumn>
        <Side>
          <Heading>Pruning history</Heading>
          <ButtonRow>
            <Button $muted $w={72}>APPLY</Button>
            <Button $muted $w={70}>RESET</Button>
          </ButtonRow>
          <History><Chip>Prune 1</Chip></History>
          <Columns>
            <SettingsColumn>
              <Heading>Legend</Heading>
              <LegendList>
                {LEGEND.map(([name, c]) => <LegendItem key={name} $c={c}>{name}</LegendItem>)}
              </LegendList>
              <Heading>Display Settings</Heading>
              <CheckList>
                {OPTIONS.map((o) => (
                  <CheckRow key={o}>
                    <Box $on={o === "Show Pies"}>
                      {o === "Show Pies" && (
                        <svg viewBox="0 0 20 20"><path d="M3.5 10.2L7.6 14.3L16.5 4.8" fill="none" stroke="#5f6567" strokeWidth="2.4" /></svg>
                      )}
                    </Box>
                    {o}
                  </CheckRow>
                ))}
              </CheckList>
              <Slider label="Adjust Max Width" top={7} position={64} />
              <Slider label="Adjust Max Pie Size" top={19} position={57} />
            </SettingsColumn>
            <ToolsColumn>
              {TOOLS.map(([title, hint, action, w], i) => (
                <Tool key={title} $h={i === 2 ? 138 : 123}>
                  <Heading>{title}{i === 0 && <HelpDot $lift={2}>?</HelpDot>}</Heading>
                  <Hint>{hint}</Hint>
                  <Button $w={w}>{action}</Button>
                </Tool>
              ))}
              <Heading>Feature Overlays</Heading>
              <Hint>Search for a feature by identifier</Hint>
              <RadioRow>
                <Radio $on />Single Lookup
                <Radio $left={3} />Bulk Entry
                <HelpDot $left={5}>?</HelpDot>
              </RadioRow>
              <Field $w={200} />
            </ToolsColumn>
          </Columns>
        </Side>
      </Main>
      <Corner $side="right" viewBox="0 0 13 13"><path d="M0 13V7Q6 5 8 0H13V13Z" /><path d="M8 13L13 8V13Z" fill="#444" /></Corner>
      <Corner $side="left" viewBox="0 0 13 13"><path d="M0 9Q1 12 5 13H0Z" /></Corner>
    </Page>
  );
}
